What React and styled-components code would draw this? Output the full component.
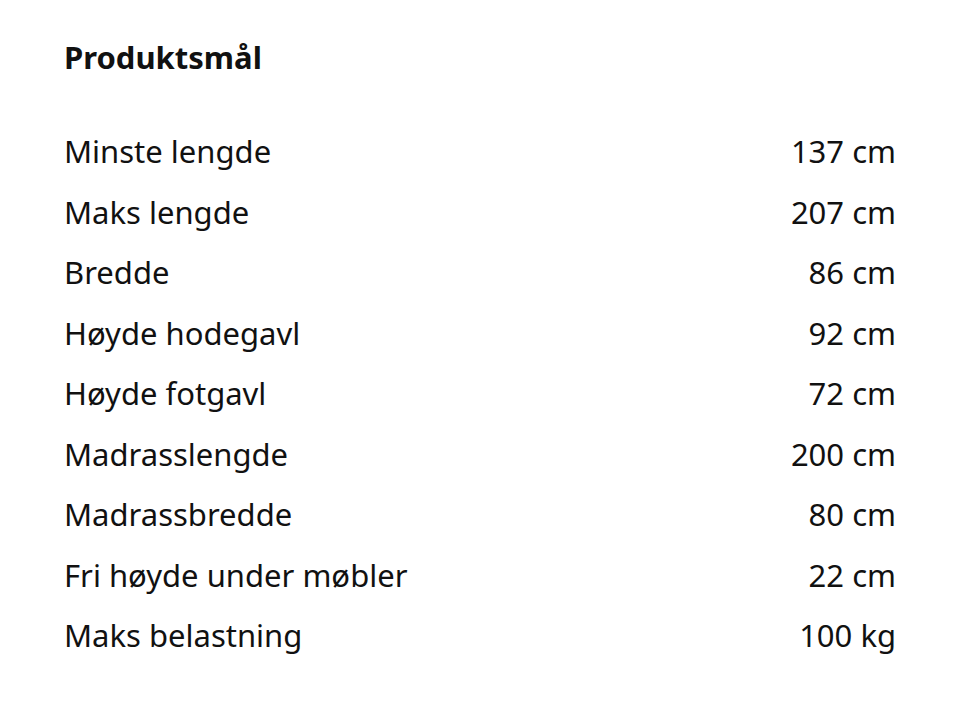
import React from 'react';
import styled, { createGlobalStyle } from 'styled-components';

const GlobalStyle = createGlobalStyle`
  body {
    margin: 0;
    background: #ffffff;
    font-family: "Noto Sans", sans-serif;
    color: #111111;
  }
`;

const Section = styled.section`
  padding: 36px 64px 0;
`;

const Title = styled.h2`
  margin: 0 0 43px;
  font-size: 31px;
  font-weight: 700;
  line-height: 42px;
`;

const List = styled.dl`
  margin: 0;
  display: flex;
  flex-direction: column;
`;

const Row = styled.div`
  display: flex;
  justify-content: space-between;
  align-items: center;
  height: 60.5px;
  font-size: 31px;
`;

const Label = styled.dt`
  margin: 0;
`;

const Value = styled.dd`
  margin: 0;
  text-align: right;
`;

const rows = [
  ['Minste lengde', '137 cm'],
  ['Maks lengde', '207 cm'],
  ['Bredde', '86 cm'],
  ['Høyde hodegavl', '92 cm'],
  ['Høyde fotgavl', '72 cm'],
  ['Madrasslengde', '200 cm'],
  ['Madrassbredde', '80 cm'],
  ['Fri høyde under møbler', '22 cm'],
  ['Maks belastning', '100 kg'],
];

const App = () => {
  return (
    <>
      <GlobalStyle />
      <Section>
        <Title>Produktsmål</Title>
        <List>
          {rows.map(([label, value]) => (
            <Row key={label}>
              <Label>{label}</Label>
              <Value>{value}</Value>
            </Row>
          ))}
        </List>
      </Section>
    </>
  );
};

export default App;
